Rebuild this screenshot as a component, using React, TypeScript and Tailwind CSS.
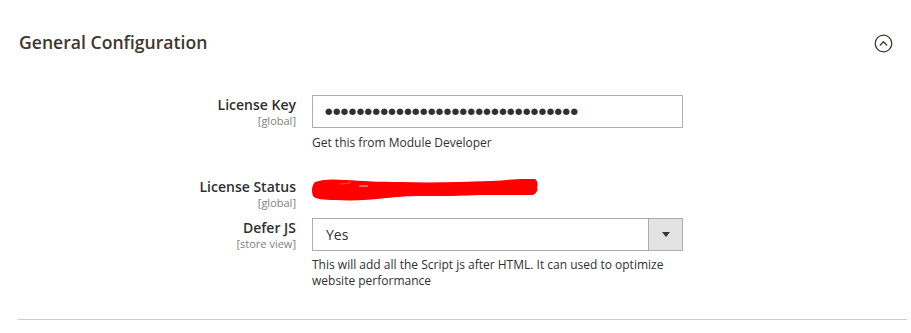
import { useState } from 'react'

interface FieldRowProps {
  label: string
  scope: string
  children: React.ReactNode
  className?: string
}

function FieldRow({ label, scope, children, className }: FieldRowProps) {
  return (
    <div className={`flex ${className ?? ''}`}>
      <div className="w-[296px] shrink-0 pt-[1px] text-right">
        <div className="text-[14px] leading-[18px] font-semibold text-[#303030]">{label}</div>
        <div className="text-[11px] leading-[14px] text-[#808080]">[{scope}]</div>
      </div>
      <div className="ml-[16px] w-[371px]">{children}</div>
    </div>
  )
}

function CollapseIcon() {
  return (
    <svg width="19" height="19" viewBox="0 0 19 19" fill="none">
      <circle cx="9.5" cy="9.5" r="8.3" stroke="#41362f" strokeWidth="1.3" />
      <path d="M6.3 11 L9.5 7.8 L12.7 11" stroke="#41362f" strokeWidth="1.3" strokeLinecap="round" strokeLinejoin="round" />
    </svg>
  )
}

function Redaction() {
  return (
    <svg width="228" height="22" viewBox="0 0 228 22" className="block">
      <path
        d="M4 3 C12 0 22 0 34 1 C50 2 70 3 90 3 C120 4 150 3 180 2 C195 1 205 0 212 0 L224 0 C227 2 227 6 226 9 C227 11 226 14 222 16 C205 16 190 16 170 16 C150 17 130 17 110 17 C95 17 85 18 75 19 C60 21 40 22 25 21 C12 21 4 20 2 17 C0 12 1 6 4 3 Z"
        fill="#ff0000"
      />
      <path d="M48 7 L57 7" stroke="#ffc0c0" strokeWidth="1" />
      <path d="M40 3.5 C36 4.5 32 5 28 5" stroke="#ff6060" strokeWidth="0.8" fill="none" />
    </svg>
  )
}

export default function App() {
  const [deferJs, setDeferJs] = useState('1')

  return (
    <div className="w-[911px] h-[333px] overflow-hidden bg-white font-['Open_Sans',sans-serif]">
      <div className="flex items-center justify-between pl-[19px] pr-[18px] pt-[30px]">
        <h2 className="text-[17.6px] leading-[24px] font-semibold text-[#41362f]">General Configuration</h2>
        <div className="mt-[3px]">
          <CollapseIcon />
        </div>
      </div>

      <FieldRow label="License Key" scope="global" className="mt-[41px]">
        <div className="flex h-[33px] w-full items-center border border-[#adadad] bg-white px-[12px]">
          <input
            type="text"
            readOnly
            value={'●'.repeat(32)}
            className="w-full bg-transparent font-['DejaVu_Sans',sans-serif] text-[8.5px] tracking-[0.5px] text-[#303030] outline-none"
          />
        </div>
        <p className="mt-[7px] text-[12px] leading-[16px] text-[#303030]">Get this from Module Developer</p>
      </FieldRow>

      <FieldRow label="License Status" scope="global" className="mt-[26px]">
        <div className="-ml-[1px] pt-[2px]">
          <Redaction />
        </div>
      </FieldRow>

      <FieldRow label="Defer JS" scope="store view" className="mt-[8px]">
        <div className="relative">
          <select
            value={deferJs}
            onChange={(e) => setDeferJs(e.target.value)}
            className="block h-[33px] w-full appearance-none border border-[#adadad] bg-white pl-[13px] pr-[40px] text-[14px] text-[#303030] outline-none"
          >
            <option value="1">Yes</option>
            <option value="0">No</option>
          </select>
          <div className="pointer-events-none absolute right-0 top-0 flex h-[33px] w-[35px] items-center justify-center border border-[#adadad] bg-[#e3e3e3]">
            <div className="h-0 w-0 border-x-[4px] border-t-[5px] border-x-transparent border-t-[#41362f]" />
          </div>
        </div>
        <p className="mt-[6px] text-[12px] leading-[16px] text-[#303030]">
          This will add all the Script js after HTML. It can used to optimize website performance
        </p>
      </FieldRow>

      <div className="ml-[18px] mr-[4px] mt-[30px] border-t border-[#cccccc]" />
    </div>
  )
}
